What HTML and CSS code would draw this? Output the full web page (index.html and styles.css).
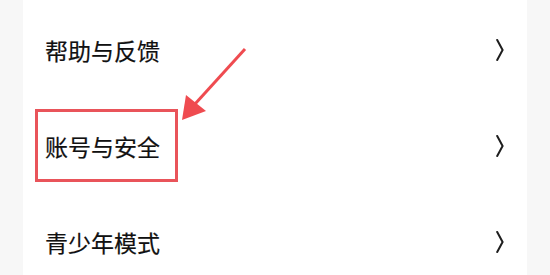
FILE: index.html
```html
<!DOCTYPE html>
<html lang="zh-CN">
<head>
  <meta charset="UTF-8">
  <meta name="viewport" content="width=device-width, initial-scale=1.0">
  <title>设置</title>
  <link rel="stylesheet" href="styles.css">
</head>
<body>
  <div class="card">
    <div class="row">
      <span class="label">帮助与反馈</span>
      <svg class="chevron" viewBox="0 0 8 22"><path d="M1.2 1 Q2 2.5 6.6 11 Q2 19.5 1.2 21"/></svg>
    </div>
    <div class="row">
      <span class="label">账号与安全</span>
      <svg class="chevron" viewBox="0 0 8 22"><path d="M1.2 1 Q2 2.5 6.6 11 Q2 19.5 1.2 21"/></svg>
    </div>
    <div class="row">
      <span class="label">青少年模式</span>
      <svg class="chevron" viewBox="0 0 8 22"><path d="M1.2 1 Q2 2.5 6.6 11 Q2 19.5 1.2 21"/></svg>
    </div>

    <!-- annotation -->
    <div class="mark-box"></div>
    <svg class="mark-arrow" width="550" height="275" viewBox="0 0 550 275">
      <line x1="245" y1="49" x2="195" y2="104"/>
      <polygon points="182,120 186,95 206,111"/>
    </svg>
  </div>
</body>
</html>
```

FILE: styles.css
```css
body {
  margin: 0;
  padding: 0;
  background: #f7f7f7;
  font-family: "Noto Sans CJK SC", "Noto Sans", sans-serif;
}
.card {
  position: relative;
  margin: 0 23px;
  padding-top: 2px;
  height: 273px;
  overflow: hidden;
  background: #fff;
}
.row {
  display: flex;
  align-items: center;
  justify-content: space-between;
  height: 96px;
  padding: 0 23px 0 22px;
}
.label {
  font-size: 23px;
  color: #111;
  -webkit-text-stroke: 0.2px #111;
}
.chevron {
  width: 8px;
  height: 22px;
  fill: none;
  stroke: #1e1e1e;
  stroke-width: 2;
  stroke-linecap: round;
}
.mark-box {
  position: absolute;
  left: 12px;
  top: 109px;
  width: 137px;
  height: 67px;
  border: 3px solid #e9545a;
}
.mark-arrow {
  position: absolute;
  left: -23px;
  top: 0;
  pointer-events: none;
}
.mark-arrow line {
  stroke: #ef4b50;
  stroke-width: 3;
}
.mark-arrow polygon {
  fill: #ef4b50;
}
```
